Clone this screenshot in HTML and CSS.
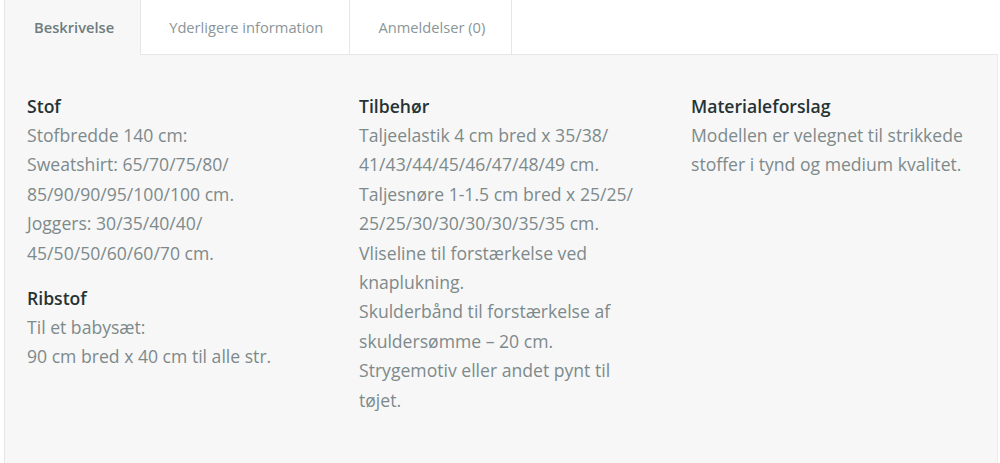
FILE: index.html
```html
<!DOCTYPE html>
<html>
<head>
  <title>Beskrivelse</title>
  <link rel="stylesheet" href="styles.css">
</head>
<body>
  <div class="tabs-wrap">
    <ul class="tabs">
      <li class="tab active">Beskrivelse</li>
      <li class="tab">Yderligere information</li>
      <li class="tab">Anmeldelser (0)</li>
    </ul>
    <div class="panel">
      <div class="col">
        <h4>Stof</h4>
        <p>Stofbredde 140 cm:<br>
        Sweatshirt: 65/70/75/80/<br>
        85/90/90/95/100/100 cm.<br>
        Joggers: 30/35/40/40/<br>
        45/50/50/60/60/70 cm.</p>
        <h4>Ribstof</h4>
        <p>Til et babysæt:<br>
        90 cm bred x 40 cm til alle str.</p>
      </div>
      <div class="col">
        <h4>Tilbehør</h4>
        <p>Taljeelastik 4 cm bred x 35/38/<br>
        41/43/44/45/46/47/48/49 cm.<br>
        Taljesnøre 1-1.5 cm bred x 25/25/<br>
        25/25/30/30/30/30/35/35 cm.<br>
        Vliseline til forstærkelse ved<br>
        knaplukning.<br>
        Skulderbånd til forstærkelse af<br>
        skuldersømme – 20 cm.<br>
        Strygemotiv eller andet pynt til<br>
        tøjet.</p>
      </div>
      <div class="col">
        <h4>Materialeforslag</h4>
        <p>Modellen er velegnet til strikkede<br>
        stoffer i tynd og medium kvalitet.</p>
      </div>
    </div>
  </div>
</body>
</html>
```

FILE: styles.css
```css
body {
  margin: 0;
  background-color: #ffffff;
  font-family: "Open Sans", "Liberation Sans", sans-serif;
}

.tabs-wrap {
  margin: 0 2px 0 4px;
}

.tabs {
  display: flex;
  list-style: none;
  margin: 0;
  padding: 0;
}

.tab {
  height: 54px;
  line-height: 54px;
  padding: 0 26px 0 28px;
  font-size: 14.7px;
  color: #8a9697;
  background-color: #ffffff;
  border-right: 1px solid #e6e6e6;
}

.tab.active {
  font-weight: 600;
  color: #6e7c7e;
  background-color: #f7f7f7;
  border-left: 1px solid #e6e6e6;
  padding: 0 26px 0 29px;
  height: 55px;
  margin-bottom: -1px;
  position: relative;
}

.panel {
  display: grid;
  grid-template-columns: 332px 332px 1fr;
  padding: 37px 0 60px 22px;
  min-height: 400px;
  background-color: #f7f7f7;
  border-top: 1px solid #e6e6e6;
  border-left: 1px solid #e6e6e6;
  border-right: 1px solid #ececec;
}

.col h4 {
  margin: 0;
  font-size: 17.6px;
  font-weight: 600;
  line-height: 29px;
  color: #263335;
}

.col p {
  margin: 0 0 16px;
  font-size: 17.6px;
  line-height: 29.4px;
  color: #7d8a8b;
}
```
